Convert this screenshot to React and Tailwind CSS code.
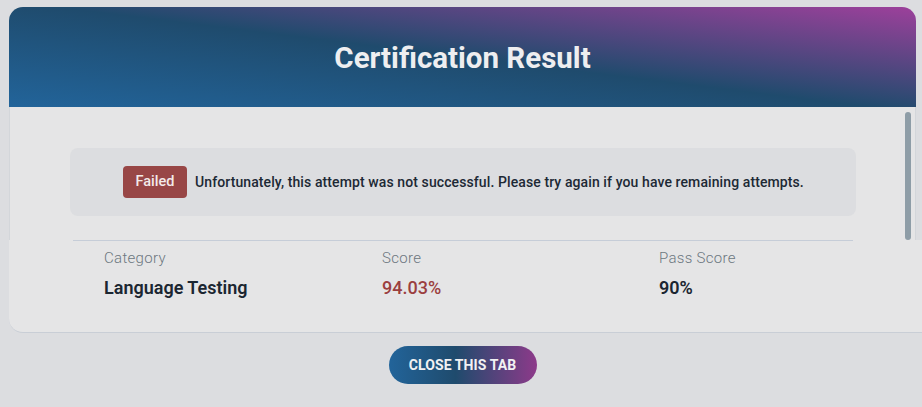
import React from 'react';

const results = [
  { label: 'Category', value: 'Language Testing', tone: 'text-[#1b2631] font-semibold' },
  { label: 'Score', value: '94.03%', tone: 'text-[#9b3f3f] font-medium' },
  { label: 'Pass Score', value: '90%', tone: 'text-[#1b2631] font-semibold' },
];

export default function App() {
  return (
    <div className="h-[407px] bg-[#dcdde0] pt-[7px] font-['Roboto',sans-serif] overflow-hidden">
      <div className="ml-[9px] w-[907px]">
        {/* Header */}
        <div className="h-[100px] rounded-t-[14px] flex items-center justify-center bg-[linear-gradient(7deg,#22649a_0%,#1f4b6d_50%,#9d409b_100%)]">
          <h1 className="text-[29.5px] font-bold text-[#eeeef0] translate-y-[1px]">Certification Result</h1>
        </div>

        {/* Scroll area */}
        <div className="relative h-[133px] bg-[#e5e5e6] border-x border-[#d3d6da] pt-[41px] pl-[60px] pr-[59px]">
          <div className="h-[68px] rounded-lg bg-[#dcdde0] flex items-center pl-[53px] gap-2">
            <span className="h-[32px] w-[64px] rounded-[4px] bg-[#984646] text-[#f3eaea] text-[14.5px] font-medium flex items-center justify-center">
              Failed
            </span>
            <p className="text-[14px] font-medium tracking-[0.1px] text-[#1d2935]">
              Unfortunately, this attempt was not successful. Please try again if you have remaining attempts.
            </p>
          </div>
          <div className="absolute right-[4px] top-[5px] bottom-0 w-[6px] rounded-full bg-[#8e9da7]" />
        </div>

        {/* Result table */}
        <div className="h-[93px] w-[913px] bg-[#e5e5e6] rounded-bl-[14px] border-b border-[#c9ced6]">
          <div className="ml-[64px] w-[780px] border-t border-[#c6cdd8]" />
          <div className="grid grid-cols-[278px_277px_1fr] pl-[95px] pt-[7px]">
            {results.map((r) => (
              <div key={r.label} className="flex flex-col gap-[8px]">
                <span className="text-[15px] leading-5 font-light tracking-[0.3px] text-[#6c7780]">{r.label}</span>
                <span className={`text-[18px] leading-6 ${r.tone}`}>{r.value}</span>
              </div>
            ))}
          </div>
        </div>

        <div className="flex justify-center mt-[13px]">
          <button className="h-[38px] w-[148px] rounded-full bg-[linear-gradient(90deg,#22649a_0%,#1f4b6d_45%,#8d3a8a_100%)] text-[14px] font-bold text-[#f1f1f3] tracking-[0.1px]">
            CLOSE THIS TAB
          </button>
        </div>
      </div>
    </div>
  );
}
